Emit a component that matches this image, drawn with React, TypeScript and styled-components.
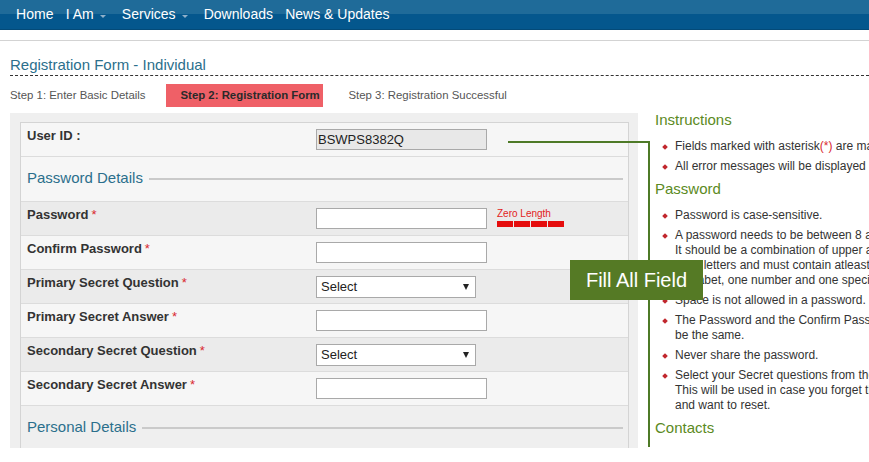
import React from "react";
import styled, { createGlobalStyle } from "styled-components";

const GlobalStyle = createGlobalStyle`
  html, body { margin: 0; padding: 0; overflow: hidden; background: #fff; }
  body { font-family: "Liberation Sans", Arial, sans-serif; color: #333; }
  * { box-sizing: border-box; }
`;

const NavBar = styled.nav`
  height: 30px;
  display: flex;
  align-items: center;
  padding-left: 10px;
  background: linear-gradient(#1f6b99 0, #1f6b99 50%, #04578d 50%, #04578d 100%);
  border-bottom: 1px solid #034a78;
`;
const NavItem = styled.a`
  color: #fff;
  font-size: 14px;
  padding: 0 6.1px;
  line-height: 29px;
  text-decoration: none;
  display: flex;
  align-items: center;
`;
const Caret = styled.span`
  width: 0;
  height: 0;
  border-left: 3px solid transparent;
  border-right: 3px solid transparent;
  border-top: 3px solid #8fb0c9;
  margin: 3px 4px 0 6px;
`;
const Divider = styled.div`
  margin-top: 10px;
  border-top: 1px solid #d3d3d3;
`;
const Main = styled.div`
  padding-left: 10px;
`;
const Title = styled.h1`
  margin: 15px 0 0;
  font-size: 15px;
  font-weight: normal;
  line-height: 18px;
  color: #2b6f8c;
  padding-bottom: 1px;
  border-bottom: 1px dashed #333;
`;
const Steps = styled.div`
  display: flex;
  align-items: center;
  margin-top: 8px;
  height: 23px;
  font-size: 11.4px;
  color: #555;
`;
const Step = styled.span<{ $active?: boolean }>`
  height: 23px;
  line-height: 23px;
  width: ${(p) => (p.$active ? "157px" : "auto")};
  padding: ${(p) => (p.$active ? "0 0 0 15px" : "0")};
  margin-right: ${(p) => (p.$active ? "26px" : "20px")};
  background: ${(p) => (p.$active ? "#ef6067" : "transparent")};
  font-weight: ${(p) => (p.$active ? "bold" : "normal")};
  color: ${(p) => (p.$active ? "#2a2a2a" : "#555")};
`;
const Content = styled.div`
  position: relative;
  display: flex;
  margin-top: 6px;
`;
const Panel = styled.div`
  flex: 0 0 628px;
  height: 335px;
  overflow: hidden;
  background: #efefef;
  padding: 9px 9px 0 10px;
`;
const FormBox = styled.div`
  border: 1px solid #d4d4d4;
  border-bottom: none;
  background: #f5f5f5;
`;
const Row = styled.div<{ $shade?: boolean }>`
  display: grid;
  grid-template-columns: 289px 1fr;
  height: 34px;
  padding: 6px 6px 0;
  border-bottom: 1px solid #dcdcdc;
  background: ${(p) => (p.$shade ? "#ebebeb" : "#f6f6f6")};
`;
const Label = styled.label`
  font-size: 13px;
  font-weight: bold;
  line-height: 14px;
  color: #333;
`;
const Req = styled.span`
  color: #d9282f;
  font-weight: normal;
  margin-left: 3px;
`;
const Field = styled.div`
  display: flex;
  align-items: flex-start;
`;
const TextInput = styled.input<{ $readonly?: boolean }>`
  width: 171px;
  height: 21px;
  border: 1px solid #a9a9a9;
  background: ${(p) => (p.$readonly ? "#e8e8e8" : "#fff")};
  font-family: "Liberation Sans", Arial, sans-serif;
  font-size: 13px;
  color: #222;
  padding: 0 1px;
  outline: none;
`;
const SelectBox = styled.div`
  width: 160px;
  height: 22px;
  border: 1px solid #a9a9a9;
  background: #fff;
  font-size: 13px;
  line-height: 20px;
  padding: 0 4px;
  color: #222;
  display: flex;
  justify-content: space-between;
  align-items: center;
`;
const SelectArrow = styled.span`
  width: 0;
  height: 0;
  border-left: 3px solid transparent;
  border-right: 3px solid transparent;
  border-top: 6px solid #222;
  margin-right: 2px;
`;
const Strength = styled.div`
  margin-left: 10px;
`;
const StrengthText = styled.div`
  font-size: 10px;
  line-height: 12px;
  color: #e21c1c;
`;
const StrengthBars = styled.div`
  display: flex;
  gap: 1px;
  margin-top: 1px;
`;
const Bar = styled.span`
  width: 16px;
  height: 6px;
  background: #e50d0d;
`;
const Section = styled.div<{ $shade?: boolean }>`
  display: flex;
  align-items: center;
  height: 45px;
  padding: 0 5px 4px 6px;
  border-bottom: 1px solid #dcdcdc;
  background: ${(p) => (p.$shade ? "#efefef" : "#f6f6f6")};
  font-size: 15px;
  color: #2b6f8c;
`;
const SectionRule = styled.span`
  flex: 1;
  height: 2px;
  background: #cacaca;
  margin: 4px 0 0 6px;
`;
const Side = styled.div`
  flex: 0 0 340px;
  margin: -3px 0 0 17px;
`;
const SideHeading = styled.h3`
  margin: 0 0 9px;
  font-size: 15px;
  font-weight: normal;
  line-height: 20px;
  color: #5b8a23;
`;
const List = styled.ul`
  list-style: none;
  margin: 0;
  padding: 0;
`;
const Item = styled.li`
  position: relative;
  padding-left: 20px;
  font-size: 12px;
  line-height: 15px;
  margin-bottom: 5px;
  white-space: nowrap;
  color: #333;
  &::before {
    content: "";
    position: absolute;
    left: 8px;
    top: 6px;
    width: 4px;
    height: 4px;
    background: #c1272d;
    transform: rotate(45deg);
  }
`;
const Red = styled.span`
  color: #d9282f;
`;
const Connector = styled.div<{ $vertical?: boolean }>`
  position: absolute;
  left: ${(p) => (p.$vertical ? "638px" : "498px")};
  top: 28px;
  width: ${(p) => (p.$vertical ? "2px" : "142px")};
  height: ${(p) => (p.$vertical ? "306px" : "2px")};
  background: #4e7a27;
`;
const Callout = styled.div`
  position: absolute;
  left: 560px;
  top: 147px;
  width: 133px;
  height: 40px;
  background: #557a25;
  color: #fff;
  font-size: 20px;
  line-height: 40px;
  text-align: center;
`;

const TextRow = ({ label, shade, required = true, children }: { label: string; shade?: boolean; required?: boolean; children?: React.ReactNode }) => (
  <Row $shade={shade}>
    <Label>
      {label}
      {required && <Req>*</Req>}
    </Label>
    <Field>{children ?? <TextInput />}</Field>
  </Row>
);

const Select = () => (
  <SelectBox>
    Select
    <SelectArrow />
  </SelectBox>
);

const App = () => {
  return (
    <>
      <GlobalStyle />
      <NavBar>
        <NavItem>Home</NavItem>
        <NavItem>
          I Am<Caret />
        </NavItem>
        <NavItem>
          Services<Caret />
        </NavItem>
        <NavItem>Downloads</NavItem>
        <NavItem>News &amp; Updates</NavItem>
      </NavBar>
      <Divider />
      <Main>
        <Title>Registration Form - Individual</Title>
        <Steps>
          <Step>Step 1: Enter Basic Details</Step>
          <Step $active>Step 2: Registration Form</Step>
          <Step>Step 3: Registration Successful</Step>
        </Steps>
        <Content>
          <Panel>
            <FormBox>
              <TextRow label="User ID :" required={false}>
                <TextInput $readonly readOnly value="BSWPS8382Q" />
              </TextRow>
              <Section>
                Password Details
                <SectionRule />
              </Section>
              <TextRow label="Password" shade>
                <TextInput type="password" />
                <Strength>
                  <StrengthText>Zero Length</StrengthText>
                  <StrengthBars>
                    <Bar />
                    <Bar />
                    <Bar />
                    <Bar />
                  </StrengthBars>
                </Strength>
              </TextRow>
              <TextRow label="Confirm Password" />
              <TextRow label="Primary Secret Question" shade>
                <Select />
              </TextRow>
              <TextRow label="Primary Secret Answer" />
              <TextRow label="Secondary Secret Question" shade>
                <Select />
              </TextRow>
              <TextRow label="Secondary Secret Answer" />
              <Section $shade>
                Personal Details
                <SectionRule />
              </Section>
            </FormBox>
          </Panel>
          <Side>
            <SideHeading>Instructions</SideHeading>
            <List>
              <Item>
                Fields marked with asterisk<Red>(*)</Red> are mandatory.
              </Item>
              <Item>All error messages will be displayed in red.</Item>
            </List>
            <SideHeading>Password</SideHeading>
            <List>
              <Item>Password is case-sensitive.</Item>
              <Item>
                A password needs to be between 8 and 14 characters.
                <br />
                It should be a combination of upper and lower
                <br />
                case letters and must contain atleast one
                <br />
                alphabet, one number and one special character.
              </Item>
              <Item>Space is not allowed in a password.</Item>
              <Item>
                The Password and the Confirm Password should
                <br />
                be the same.
              </Item>
              <Item>Never share the password.</Item>
              <Item>
                Select your Secret questions from the list.
                <br />
                This will be used in case you forget the password
                <br />
                and want to reset.
              </Item>
            </List>
            <SideHeading>Contacts</SideHeading>
          </Side>
          <Connector />
          <Connector $vertical />
          <Callout>Fill All Field</Callout>
        </Content>
      </Main>
    </>
  );
};

export default App;
